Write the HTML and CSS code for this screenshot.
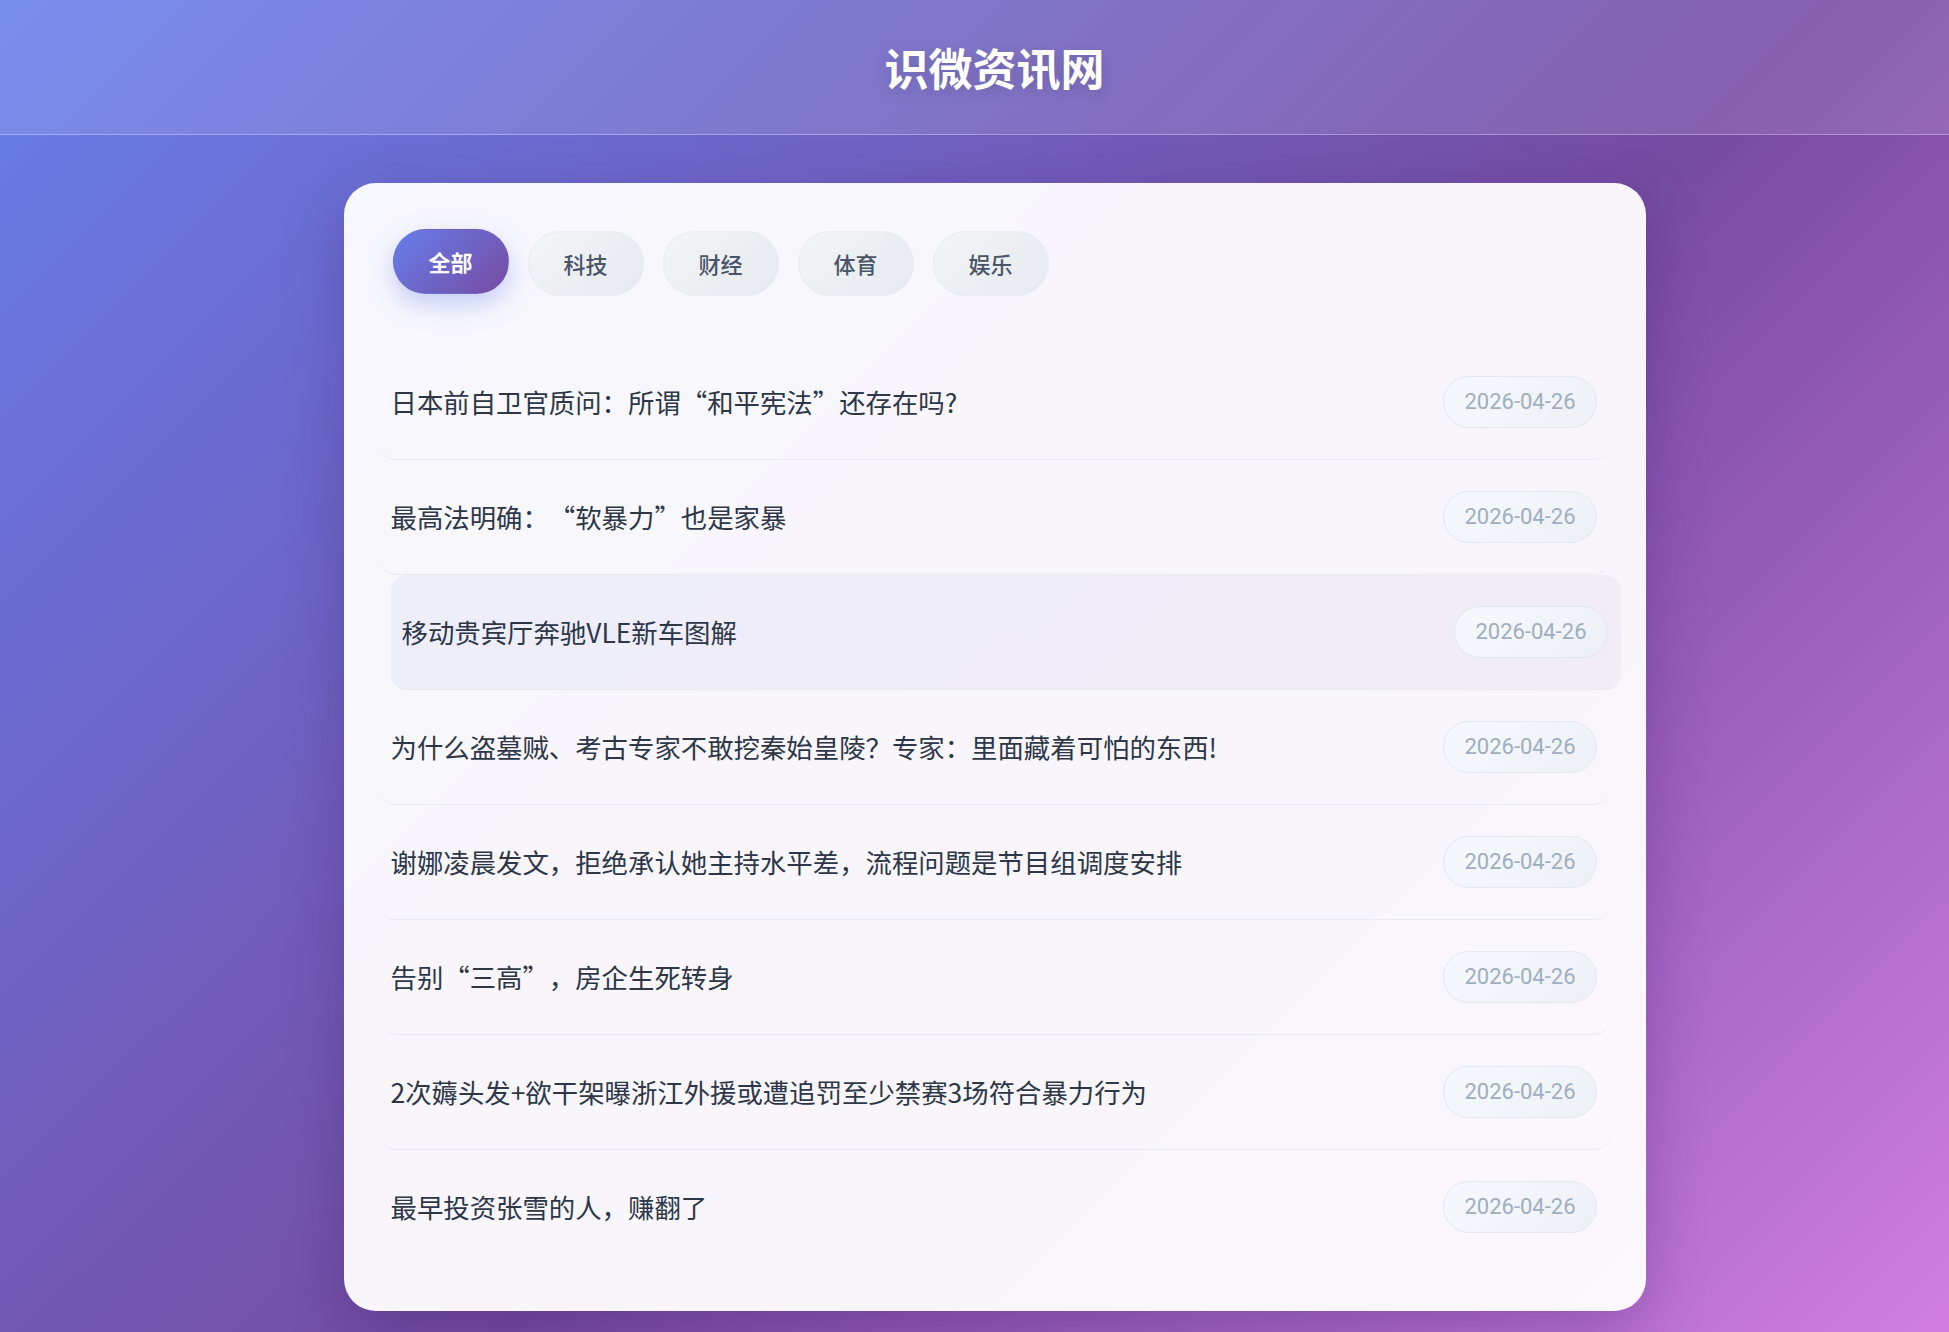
FILE: index.html
```html
<!DOCTYPE html>
<html lang="zh-CN">
<head>
<meta charset="UTF-8">
<title>识微资讯网</title>
<link rel="stylesheet" href="styles.css">
</head>
<body>
<header class="site-header">
  <h1 class="site-title">识微资讯网</h1>
</header>
<main class="main">
  <section class="card">
    <nav class="tabs">
      <button class="tab tab-active">全部</button>
      <button class="tab">科技</button>
      <button class="tab">财经</button>
      <button class="tab">体育</button>
      <button class="tab">娱乐</button>
    </nav>
    <ul class="news-list">
      <li class="news-item"><span class="news-title">日本前自卫官质问：所谓“和平宪法”还存在吗?</span><span class="news-date">2026-04-26</span></li>
      <li class="news-item"><span class="news-title">最高法明确：“软暴力”也是家暴</span><span class="news-date">2026-04-26</span></li>
      <li class="news-item news-item-hover"><span class="news-title">移动贵宾厅奔驰VLE新车图解</span><span class="news-date">2026-04-26</span></li>
      <li class="news-item"><span class="news-title">为什么盗墓贼、考古专家不敢挖秦始皇陵？专家：里面藏着可怕的东西!</span><span class="news-date">2026-04-26</span></li>
      <li class="news-item"><span class="news-title">谢娜凌晨发文，拒绝承认她主持水平差，流程问题是节目组调度安排</span><span class="news-date">2026-04-26</span></li>
      <li class="news-item"><span class="news-title">告别“三高”，房企生死转身</span><span class="news-date">2026-04-26</span></li>
      <li class="news-item"><span class="news-title">2次薅头发+欲干架曝浙江外援或遭追罚至少禁赛3场符合暴力行为</span><span class="news-date">2026-04-26</span></li>
      <li class="news-item"><span class="news-title">最早投资张雪的人，赚翻了</span><span class="news-date">2026-04-26</span></li>
    </ul>
  </section>
</main>
</body>
</html>
```

FILE: styles.css
```css
* {
  box-sizing: border-box;
}

html, body {
  margin: 0;
  padding: 0;
}

body {
  min-height: 100vh;
  font-family: "Noto Sans CJK SC", "Noto Sans", sans-serif;
  background: linear-gradient(135deg, #667eea 0%, #764ba2 56%, #d07ee2 100%);
  overflow: hidden;
}

.site-header {
  height: 135px;
  padding-left: 40px;
  display: flex;
  align-items: center;
  justify-content: center;
  background: rgba(255, 255, 255, 0.12);
  border-bottom: 1px solid rgba(255, 255, 255, 0.3);
}

.site-title {
  margin: 0;
  color: #ffffff;
  font-size: 44px;
  font-weight: 700;
  line-height: 1;
  text-shadow: 0 4px 14px rgba(0, 0, 0, 0.15);
}

.main {
  padding: 48px 0 0 40px;
  display: flex;
  justify-content: center;
}

.card {
  width: 1302px;
  padding: 48px 36px 47px;
  background: rgba(255, 255, 255, 0.95);
  border-radius: 32px;
  box-shadow: 0 20px 60px rgba(40, 10, 80, 0.25);
}

.tabs {
  display: flex;
  gap: 19px;
  padding: 0 13px;
  margin-bottom: 49px;
}

.tab {
  font-family: inherit;
  font-size: 22px;
  line-height: 33px;
  padding: 15px 35px;
  border-radius: 33px;
  border: 1px solid #e8ebef;
  background: linear-gradient(135deg, #f3f5f7 0%, #e6eaee 100%);
  color: #4a5568;
  font-weight: 500;
  cursor: pointer;
}

.tab-active {
  color: #ffffff;
  font-weight: 700;
  border-color: transparent;
  background: linear-gradient(135deg, #667eea 0%, #764ba2 100%);
  box-shadow: 0 10px 25px rgba(102, 126, 234, 0.35);
  transform: translateY(-2px);
}

.news-list {
  list-style: none;
  margin: 0;
  padding: 0;
}

.news-item {
  display: flex;
  align-items: center;
  justify-content: space-between;
  gap: 24px;
  padding: 31px 13px 31px 11px;
  border-bottom: 1px solid #e8eaf1;
  border-radius: 16px;
}

.news-item:last-child {
  border-bottom: none;
}

.news-item-hover {
  background: linear-gradient(135deg, rgba(102, 126, 234, 0.07) 0%, rgba(118, 75, 162, 0.06) 100%);
  transform: translateX(11px);
}

.news-title {
  font-size: 26.4px;
  line-height: 36px;
  color: #2d3748;
  font-weight: 400;
  text-spacing-trim: space-all;
}

.news-date {
  flex-shrink: 0;
  font-family: Roboto, "Noto Sans CJK SC", sans-serif;
  font-size: 22px;
  line-height: 30px;
  padding: 10px 20px;
  color: #a0aec0;
  border: 1px solid #e3e8ef;
  border-radius: 26px;
  background: linear-gradient(135deg, #f6f9fc 0%, #edf1f6 100%);
}
```
